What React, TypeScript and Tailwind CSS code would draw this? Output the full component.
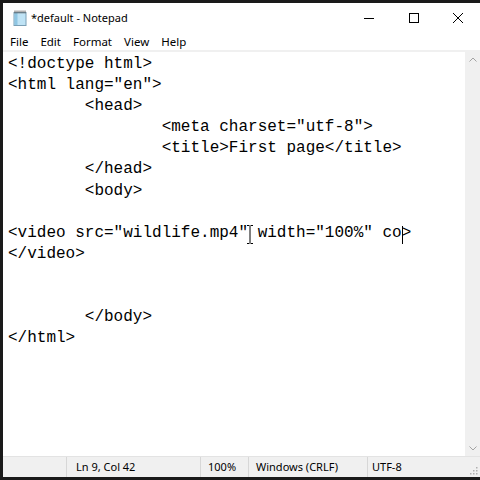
import React from "react";

const lines = [
  "<!doctype html>",
  '<html lang="en">',
  "        <head>",
  '                <meta charset="utf-8">',
  "                <title>First page</title>",
  "        </head>",
  "        <body>",
  "",
  "VIDEO",
  "</video>",
  "",
  "",
  "        </body>",
  "</html>",
];

function NotepadIcon() {
  return (
    <svg width="16" height="16" viewBox="0 0 16 16">
      <rect x="2" y="2.5" width="12" height="13" fill="#bfe3f5" stroke="#7a9fb5" strokeWidth="1" />
      <rect x="2.5" y="3" width="3" height="12" fill="#8fc6e3" />
      {[3, 5, 7, 9, 11, 13].map((x) => (
        <line key={x} x1={x} y1="0.5" x2={x} y2="3.5" stroke="#555" strokeWidth="0.9" />
      ))}
    </svg>
  );
}

function IBeam() {
  return (
    <svg width="8" height="19" viewBox="0 0 8 19" className="absolute left-[-2px] top-[1px]">
      <path d="M1 0.5 H3.5 M4.5 0.5 H7 M4 1 V18 M1 18.5 H3.5 M4.5 18.5 H7" stroke="#000" strokeWidth="1" fill="none" />
    </svg>
  );
}

export default function App() {
  const ui = { fontFamily: '"Noto Sans", "Open Sans", sans-serif' };
  return (
    <div className="w-[480px] h-[480px] bg-[#1a1a1a] pt-[3px] pl-[3px] pb-[3px] flex flex-col overflow-hidden">
      <div className="flex-1 flex flex-col bg-white min-h-0">
        {/* Title bar */}
        <div className="h-[29px] flex items-center text-[11px] text-black shrink-0" style={ui}>
          <div className="ml-[9px] mr-[3px] flex items-center">
            <NotepadIcon />
          </div>
          <span className="leading-none">*default - Notepad</span>
          <div className="ml-auto flex h-full">
            <div className="w-[45px] h-full flex items-center justify-center">
              <svg width="10" height="10" viewBox="0 0 10 10"><line x1="0" y1="5.5" x2="10" y2="5.5" stroke="#000" strokeWidth="1" /></svg>
            </div>
            <div className="w-[45px] h-full flex items-center justify-center">
              <svg width="10" height="10" viewBox="0 0 10 10"><rect x="0.5" y="0.5" width="9" height="9" fill="none" stroke="#000" strokeWidth="1" /></svg>
            </div>
            <div className="w-[44px] h-full flex items-center justify-center">
              <svg width="10" height="10" viewBox="0 0 10 10"><path d="M0 0 L10 10 M10 0 L0 10" stroke="#000" strokeWidth="1" /></svg>
            </div>
          </div>
        </div>
        {/* Menu bar */}
        <div className="h-[18px] pt-[2px] flex items-center text-[11.5px] text-black shrink-0 pl-[5px]" style={ui}>
          <span className="px-[2px]">File</span>
          <span className="ml-[8px] px-[2px]">Edit</span>
          <span className="ml-[8px] px-[2px]">Format</span>
          <span className="ml-[8px] px-[2px]">View</span>
          <span className="ml-[8px] px-[2px]">Help</span>
        </div>
        <div className="h-[2px] bg-[#f0f0f0] shrink-0" />
        {/* Editor */}
        <div className="flex-1 flex min-h-0">
          <div
            className="flex-1 pl-[5px] pt-[2px] text-[16px] leading-[21.1px] text-black whitespace-pre"
            style={{ fontFamily: '"Liberation Mono", monospace' }}
          >
            {lines.map((l, i) =>
              l === "VIDEO" ? (
                <div key={i} className="h-[21.1px]">
                  {'<video src="wildlife.mp4"'}
                  <span className="relative">
                    {" "}
                    <IBeam />
                  </span>
                  {'width="100%" co'}
                  <span className="relative">
                    <span className="absolute left-0 top-[2px] w-[1px] h-[18px] bg-black" />
                  </span>
                  {">"}
                </div>
              ) : (
                <div key={i} className="h-[21.1px]">{l || " "}</div>
              )
            )}
          </div>
          <div className="w-[15px] bg-[#f0f0f0] flex flex-col justify-between items-center py-[5px]">
            <svg width="8" height="5" viewBox="0 0 8 5"><path d="M0.5 4.5 L4 1 L7.5 4.5" stroke="#a3a3a3" strokeWidth="1" fill="none" /></svg>
            <svg width="8" height="5" viewBox="0 0 8 5"><path d="M0.5 0.5 L4 4 L7.5 0.5" stroke="#a3a3a3" strokeWidth="1" fill="none" /></svg>
          </div>
        </div>
        {/* Status bar */}
        <div className="h-[21px] bg-[#f0f0f0] border-t border-[#e3e3e3] flex items-center text-[11px] text-black shrink-0 relative" style={ui}>
          <div className="w-[64px] h-full border-r border-[#d7d7d7]" />
          <div className="w-[134px] h-full border-r border-[#d7d7d7] pl-[9px] pt-[1px] flex items-center">Ln 9, Col 42</div>
          <div className="w-[48px] h-full border-r border-[#d7d7d7] pl-[7px] pt-[1px] flex items-center">100%</div>
          <div className="w-[119px] h-full border-r border-[#d7d7d7] pl-[7px] pt-[1px] flex items-center">Windows (CRLF)</div>
          <div className="pl-[4px] pt-[1px] flex items-center">UTF-8</div>
          <svg width="10" height="10" viewBox="0 0 10 10" className="absolute right-[2px] bottom-[2px]">
            {[
              [8, 2], [8, 5], [5, 5], [8, 8], [5, 8], [2, 8],
            ].map(([x, y], i) => (
              <rect key={i} x={x} y={y} width="1.5" height="1.5" fill="#b0b0b0" />
            ))}
          </svg>
        </div>
      </div>
    </div>
  );
}
